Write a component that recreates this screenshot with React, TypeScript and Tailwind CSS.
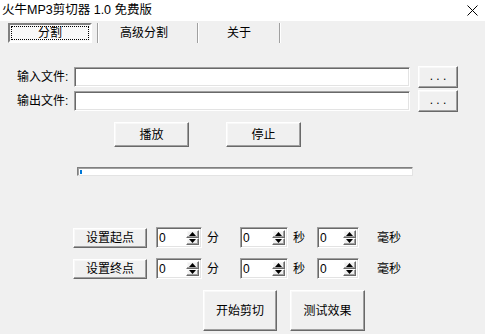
import React from 'react';

const font = "font-['Liberation_Sans','Noto_Sans_CJK_SC',sans-serif]";

const raised =
  'border border-t-white border-l-white border-r-[#696969] border-b-[#696969] shadow-[inset_-1px_-1px_0_#a0a0a0,inset_1px_1px_0_#f8f8f8] bg-[#f0f0f0]';
const sunken =
  'border border-t-[#a0a0a0] border-l-[#a0a0a0] border-r-white border-b-white shadow-[inset_1px_1px_0_#696969,inset_-1px_-1px_0_#e3e3e3] bg-white';

function Btn({ label, className }: { label: string; className: string }) {
  return (
    <div className={`${raised} ${className} flex items-center justify-center text-[12px] text-black`}>
      {label}
    </div>
  );
}

function Spinner({ w }: { w: string }) {
  return (
    <div className={`${sunken} ${w} h-[21px] flex items-center pl-[2px] pr-[2px]`}>
      <span className="flex-1 text-[12px] leading-none text-black">0</span>
      <div className="flex flex-col w-[13px] h-[15px]">
        <div className={`${raised} flex-1 flex items-center justify-center`}>
          <svg width="7" height="4" viewBox="0 0 7 4">
            <path d="M0 4 L3.5 0 L7 4 Z" fill="#000" />
          </svg>
        </div>
        <div className={`${raised} flex-1 flex items-center justify-center`}>
          <svg width="7" height="4" viewBox="0 0 7 4">
            <path d="M0 0 L3.5 4 L7 0 Z" fill="#000" />
          </svg>
        </div>
      </div>
    </div>
  );
}

function FileRow({ label }: { label: string }) {
  return (
    <div className="flex items-center h-[22px]">
      <span className="ml-[17px] w-[55px] text-[12px] text-black whitespace-nowrap">{label}</span>
      <div className={`${sunken} ml-[2px] w-[336px] h-[20px]`} />
      <Btn label=". . ." className="ml-[8px] w-[40px] h-[22px] pb-[2px]" />
    </div>
  );
}

function TimeRow({ label }: { label: string }) {
  return (
    <div className="flex items-center h-[21px] text-[12px] text-black">
      <Btn label={label} className="ml-[73px] w-[74px] h-[20px]" />
      <div className="ml-[9px]">
        <Spinner w="w-[46px]" />
      </div>
      <span className="ml-[5px]">分</span>
      <div className="ml-[21px]">
        <Spinner w="w-[48px]" />
      </div>
      <span className="ml-[5px]">秒</span>
      <div className="ml-[12px]">
        <Spinner w="w-[42px]" />
      </div>
      <span className="ml-[18px]">毫秒</span>
    </div>
  );
}

export default function App() {
  return (
    <div className={`${font} w-[485px] h-[334px] flex flex-col bg-[#f0f0f0] overflow-hidden`}>
      <div className="h-[21px] bg-white flex items-center justify-between pl-[2px] pr-[7px]">
        <span className="text-[12.5px] text-black leading-none">火牛MP3剪切器 1.0 免费版</span>
        <svg width="11" height="11" viewBox="0 0 11 11">
          <path d="M0.5 0.5 L10.5 10.5 M10.5 0.5 L0.5 10.5" stroke="#000" strokeWidth="1" />
        </svg>
      </div>

      <div className="mt-[2px] h-[20px] flex items-stretch text-[12px] text-black">
        <div className="ml-[8px] w-[84px] border-2 border-t-[#808080] border-l-[#808080] border-r-white border-b-white bg-[#f8f8f8] p-[1px]">
          <div className="w-full h-full border border-dotted border-black flex items-center justify-center">
            分割
          </div>
        </div>
        <div className="ml-[5px] w-[2px] border-l border-[#a0a0a0] bg-white" />
        <div className="w-[98px] pr-[8px] flex items-center justify-center">高级分割</div>
        <div className="w-[2px] border-l border-[#a0a0a0] bg-white" />
        <div className="w-[80px] flex items-center justify-center">关于</div>
        <div className="w-[2px] border-l border-[#a0a0a0] bg-white" />
      </div>

      <div className="mt-[23px] flex flex-col gap-[2px]">
        <FileRow label="输入文件:" />
        <FileRow label="输出文件:" />
      </div>

      <div className="mt-[10px] flex h-[25px]">
        <Btn label="播放" className="ml-[114px] w-[75px] h-[25px]" />
        <Btn label="停止" className="ml-[37px] w-[75px] h-[25px]" />
      </div>

      <div className="mt-[20px] ml-[77px] w-[336px] h-[9px] border border-t-[#808080] border-l-[#808080] border-r-[#e3e3e3] border-b-[#e3e3e3] bg-white shadow-[inset_1px_1px_0_#a0a0a0] flex items-center pl-[2px]">
        <div className="w-[2px] h-[4px] bg-[#0078d7]" />
      </div>

      <div className="mt-[51px]">
        <TimeRow label="设置起点" />
      </div>
      <div className="mt-[10px]">
        <TimeRow label="设置终点" />
      </div>

      <div className="mt-[11px] flex">
        <Btn label="开始剪切" className="ml-[203px] w-[74px] h-[41px]" />
        <Btn label="测试效果" className="ml-[13px] w-[75px] h-[41px]" />
      </div>
    </div>
  );
}
